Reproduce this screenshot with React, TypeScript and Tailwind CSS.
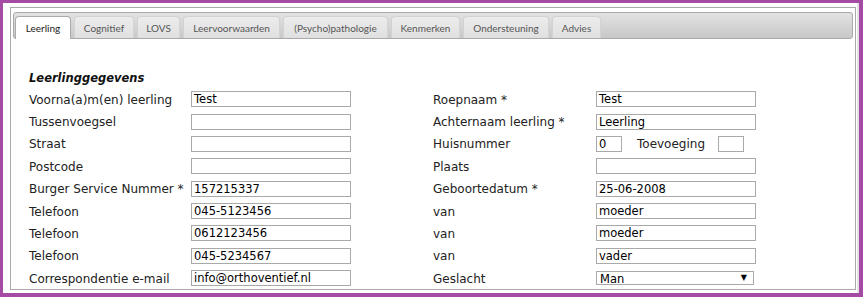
import React from "react";

const tabs = [
  { name: "Leerling", w: "w-[56px]" },
  { name: "Cognitief", w: "w-[60px]" },
  { name: "LOVS", w: "w-[43px]" },
  { name: "Leervoorwaarden", w: "w-[97px]" },
  { name: "(Psycho)pathologie", w: "w-[105px]" },
  { name: "Kenmerken", w: "w-[69px]" },
  { name: "Ondersteuning", w: "w-[86px]" },
  { name: "Advies", w: "w-[49px]" },
];

type Row = { left: string; leftValue: string; right: string; rightValue?: string; kind?: "house" | "select" };

const rows: Row[] = [
  { left: "Voorna(a)m(en) leerling", leftValue: "Test", right: "Roepnaam *", rightValue: "Test" },
  { left: "Tussenvoegsel", leftValue: "", right: "Achternaam leerling *", rightValue: "Leerling" },
  { left: "Straat", leftValue: "", right: "Huisnummer", kind: "house" },
  { left: "Postcode", leftValue: "", right: "Plaats", rightValue: "" },
  { left: "Burger Service Nummer *", leftValue: "157215337", right: "Geboortedatum *", rightValue: "25-06-2008" },
  { left: "Telefoon", leftValue: "045-5123456", right: "van", rightValue: "moeder" },
  { left: "Telefoon", leftValue: "0612123456", right: "van", rightValue: "moeder" },
  { left: "Telefoon", leftValue: "045-5234567", right: "van", rightValue: "vader" },
  { left: "Correspondentie e-mail", leftValue: "info@orthoventief.nl", right: "Geslacht", kind: "select" },
];

const Field = ({ value, width = "w-[160px]" }: { value: string; width?: string }) => (
  <div className={`${width} h-[16px] border border-[#a9a9a9] bg-white px-[2px] text-[11.5px] leading-[15px] text-black overflow-hidden whitespace-nowrap`}>
    {value}
  </div>
);

export default function App() {
  return (
    <div className="w-[863px] h-[297px] border-t-[3px] border-l-[3px] border-r-[4px] border-b-[4px] border-[#a54ba5] bg-white overflow-hidden font-['DejaVu_Sans',sans-serif]">
      <div className="flex h-full overflow-hidden">
        <div className="ml-[7px] mt-[4px] w-[846px] border border-[#aaaaaa] px-[2px] pt-[4px] self-start">
          <nav className="flex items-start gap-[3px] h-[27px] border border-[#aaaaaa] rounded-[3px] bg-gradient-to-b from-[#e2e2e2] to-[#c8c8c8] pt-[3px] pl-[1px]">
            {tabs.map((tab, i) =>
              i === 0 ? (
                <div
                  key={tab.name}
                  className={`${tab.w} relative z-10 h-[23px] flex items-center justify-center border border-b-0 border-[#aaaaaa] rounded-t-[4px] bg-white text-[10px] text-[#212121] font-['Lato',sans-serif] pt-[1px]`}
                >
                  {tab.name}
                </div>
              ) : (
                <div
                  key={tab.name}
                  className={`${tab.w} h-[22px] flex items-center justify-center border border-b-0 border-[#d3d3d3] rounded-t-[4px] bg-gradient-to-b from-[#ececec] to-[#e0e0e0] text-[10px] text-[#555555] font-['Lato',sans-serif] pt-[1px]`}
                >
                  {tab.name}
                </div>
              )
            )}
          </nav>
          <div className="pl-[16px] pt-[29px] text-[12px] text-[#222222]">
            <div className="h-[20px] leading-[20px] text-[11.5px] font-bold italic text-[#111111]">Leerlinggegevens</div>
            {rows.map((row, i) => (
              <div key={i} className="flex items-center h-[22.375px]">
                <div className="w-[162px] whitespace-nowrap pt-[1px]">{row.left}</div>
                <Field value={row.leftValue} />
                <div className="w-[82px]" />
                <div className="w-[163px] whitespace-nowrap pt-[1px]">{row.right}</div>
                {row.kind === "house" ? (
                  <div className="flex items-center">
                    <Field value="0" width="w-[26px]" />
                    <div className="w-[15px]" />
                    <div className="w-[81px] whitespace-nowrap pt-[1px]">Toevoeging</div>
                    <Field value="" width="w-[26px]" />
                  </div>
                ) : row.kind === "select" ? (
                  <div className="w-[158px] h-[14px] border border-[#a9a9a9] flex items-center justify-between pl-[3px] pr-[6px] text-[11.5px] text-black">
                    <span className="leading-[12px] pt-[1px]">Man</span>
                    <span className="text-[8px] leading-[8px]">▼</span>
                  </div>
                ) : (
                  <Field value={row.rightValue ?? ""} />
                )}
              </div>
            ))}
          </div>
        </div>
        <div className="ml-[1px] w-[2px] h-full bg-[#e4e4e4]" />
      </div>
    </div>
  );
}
